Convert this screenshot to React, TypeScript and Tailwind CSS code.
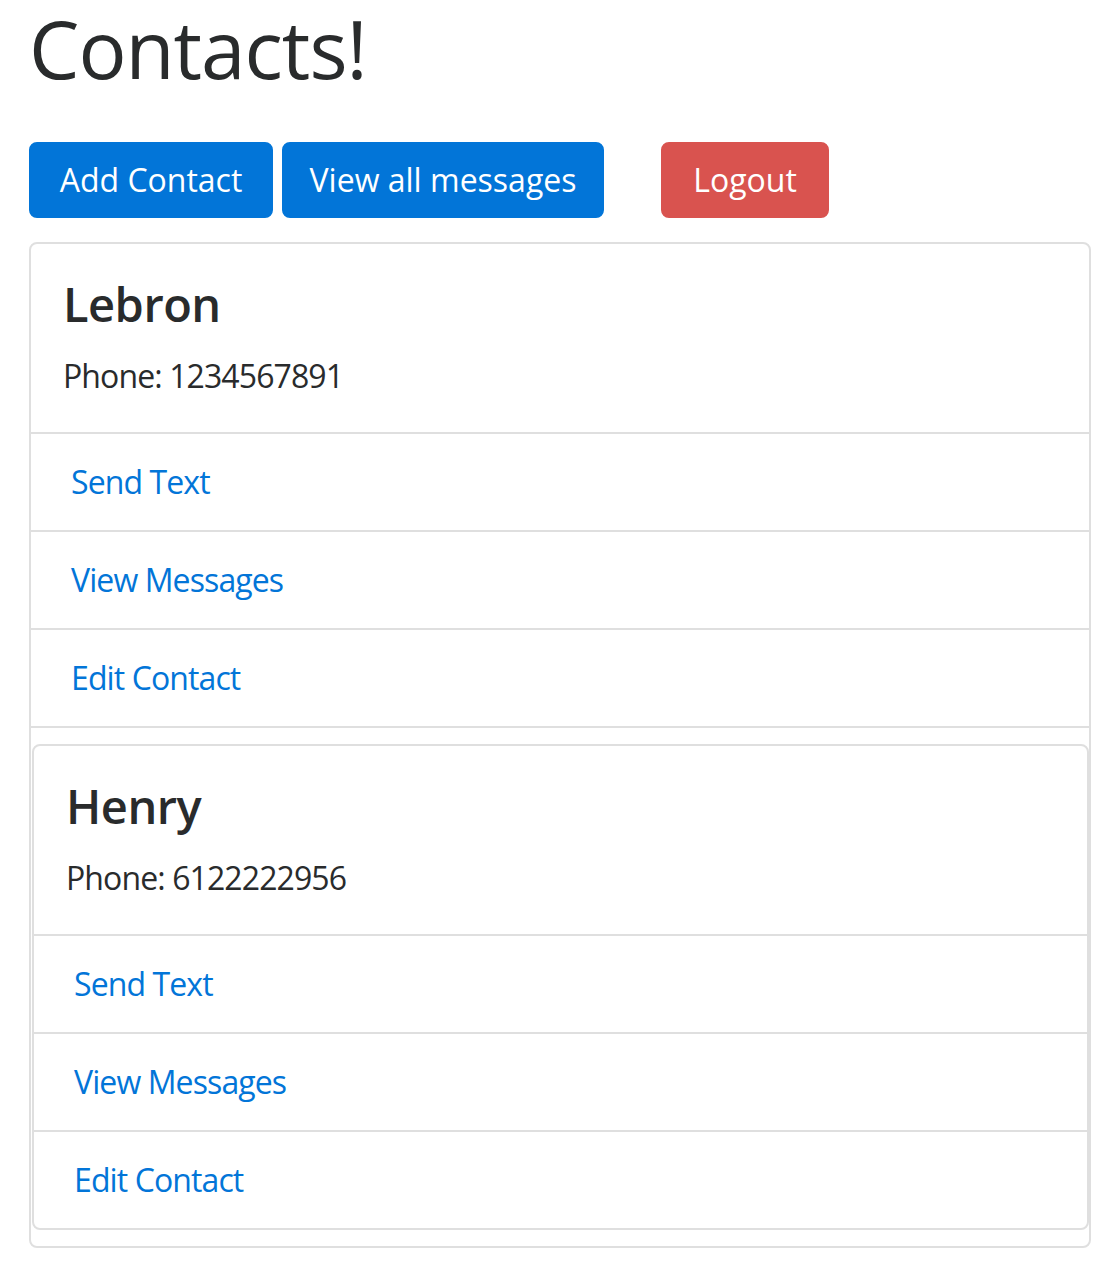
const contacts = [
  { name: 'Lebron', phone: '1234567891' },
  { name: 'Henry', phone: '6122222956' },
];

const actions = ['Send Text', 'View Messages', 'Edit Contact'];

function ContactCard({ index }: { index: number }) {
  const c = contacts[index];
  const nested = index + 1 < contacts.length;
  return (
    <div className="border-2 border-[#dfdfdf] rounded-[8px] bg-white">
      <div className="px-[32px] pt-[32px] pb-[32px]">
        <h4 className="text-[47px] leading-[56px] font-semibold tracking-[-0.5px] mb-[20px]">{c.name}</h4>
        <p className="text-[32px] leading-[48px] tracking-[-0.9px]">Phone: {c.phone}</p>
      </div>
      <div>
        {actions.map((a, i) => (
          <div
            key={a}
            className={
              'border-t-2 border-[#dfdfdf] px-[40px] py-[24px] text-[32px] leading-[48px] tracking-[-0.9px] ' +
              (i === actions.length - 1 && nested ? 'border-b-2' : '')
            }
          >
            <a href="#" className="text-[#0275d8]">
              {a}
            </a>
          </div>
        ))}
      </div>
      {nested && (
        <div className="my-[16px] ml-px">
          <ContactCard index={index + 1} />
        </div>
      )}
    </div>
  );
}

export default function App() {
  return (
    <div
      className="bg-white min-h-screen text-[#292b2c] pl-[29px] pr-[18px]"
      style={{ fontFamily: '"Open Sans", "Noto Sans", sans-serif' }}
    >
      <h1 className="text-[80px] leading-[96px] font-medium tracking-[-1px] mb-[46px]">Contacts!</h1>
      <div className="flex items-center mb-[24px]">
        <button className="w-[244px] bg-[#0275d8] border-2 border-[#0275d8] text-white text-[32px] leading-[48px] py-[12px] rounded-[8px]">
          Add Contact
        </button>
        <button className="w-[322px] ml-[9px] bg-[#0275d8] border-2 border-[#0275d8] text-white text-[32px] leading-[48px] py-[12px] rounded-[8px]">
          View all messages
        </button>
        <button className="w-[168px] ml-[57px] bg-[#d9534f] border-2 border-[#d9534f] text-white text-[32px] leading-[48px] py-[12px] rounded-[8px]">
          Logout
        </button>
      </div>
      <ContactCard index={0} />
    </div>
  );
}
